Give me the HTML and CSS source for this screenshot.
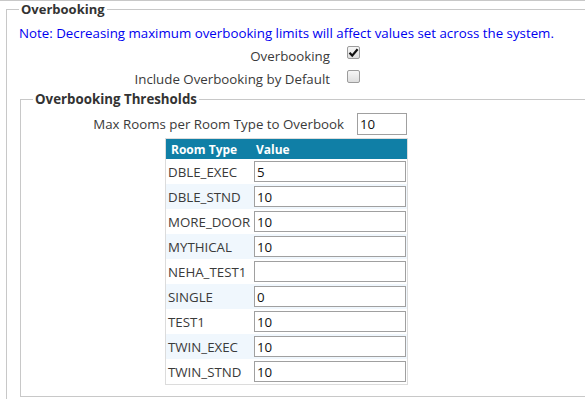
FILE: index.html
```html
<!DOCTYPE html>
<html>
<head>
<meta charset="utf-8">
<link rel="stylesheet" href="styles.css">
</head>
<body>
<div class="page">
  <fieldset class="fs outer">
    <legend class="lg">Overbooking</legend>
    <p class="note">Note: Decreasing maximum overbooking limits will affect values set across the system.</p>
    <div class="row">
      <span class="lbl">Overbooking</span>
      <span class="cb"><svg width="11" height="11" viewBox="0 0 11 11"><path d="M1.5 5.8 L4.2 8.6 L9.6 2.2" fill="none" stroke="#111" stroke-width="2.2" stroke-linejoin="miter"/></svg></span>
    </div>
    <div class="row">
      <span class="lbl">Include Overbooking by Default</span>
      <span class="cb cb-low"></span>
    </div>
    <fieldset class="fs inner">
      <legend class="lg lg-inner">Overbooking Thresholds</legend>
      <div class="max-row">
        <span class="max-lbl">Max Rooms per Room Type to Overbook</span>
        <input class="inp inp-max" type="text" value="10">
      </div>
      <table class="grid">
        <thead>
          <tr><th class="th-type">Room Type</th><th class="th-val">Value</th></tr>
        </thead>
        <tbody>
          <tr><td class="c-type">DBLE_EXEC</td><td class="c-val"><input class="inp" type="text" value="5"></td></tr>
          <tr><td class="c-type">DBLE_STND</td><td class="c-val"><input class="inp" type="text" value="10"></td></tr>
          <tr><td class="c-type">MORE_DOOR</td><td class="c-val"><input class="inp" type="text" value="10"></td></tr>
          <tr><td class="c-type">MYTHICAL</td><td class="c-val"><input class="inp" type="text" value="10"></td></tr>
          <tr><td class="c-type">NEHA_TEST1</td><td class="c-val"><input class="inp" type="text" value=""></td></tr>
          <tr><td class="c-type">SINGLE</td><td class="c-val"><input class="inp" type="text" value="0"></td></tr>
          <tr><td class="c-type">TEST1</td><td class="c-val"><input class="inp" type="text" value="10"></td></tr>
          <tr><td class="c-type">TWIN_EXEC</td><td class="c-val"><input class="inp" type="text" value="10"></td></tr>
          <tr><td class="c-type">TWIN_STND</td><td class="c-val"><input class="inp" type="text" value="10"></td></tr>
        </tbody>
      </table>
    </fieldset>
  </fieldset>
</div>
</body>
</html>
```

FILE: styles.css
```css
html, body {
  margin: 0;
  padding: 0;
  background: #fff;
  overflow: hidden;
}
body {
  font-family: "Open Sans", "Noto Sans", sans-serif;
  font-size: 13.3px;
  color: #3a3a3a;
}
.page {
  width: 640px;
  border-top: 1px solid #c8c8c8;
  padding-left: 6px;
}
.fs {
  border: 1px solid #c8c8c8;
  margin: 0;
  min-width: 0;
}
.outer {
  padding: 6px 0 0 12px;
  height: 420px;
}
.lg {
  font-weight: bold;
  font-size: 13px;
  line-height: 17px;
  padding: 0 2px;
  color: #333;
}
.lg-inner {
  font-size: 13.3px;
}
.note {
  margin: 0 0 3px 0;
  line-height: 18px;
  color: #0000f0;
  white-space: nowrap;
}
.row {
  display: flex;
  align-items: flex-start;
  height: 23px;
  line-height: 23px;
}
.lbl {
  width: 311px;
  text-align: right;
  white-space: nowrap;
}
.cb {
  margin-left: 17px;
  margin-top: 1px;
  width: 13px;
  height: 13px;
  box-sizing: border-box;
  border: 1px solid #9c9c9c;
  border-radius: 2px;
  background: linear-gradient(#f6f6f6, #dedede);
  display: flex;
  align-items: center;
  justify-content: center;
}
.cb-low {
  margin-top: 2px;
}
.inner {
  margin: 0 0 0 1px;
  padding: 5px 0 11px 12px;
}
.max-row {
  display: flex;
  align-items: center;
  height: 22px;
}
.max-lbl {
  width: 311px;
  text-align: right;
  white-space: nowrap;
}
.inp {
  box-sizing: border-box;
  height: 21px;
  width: 152px;
  margin: 2px 0;
  padding: 0 2px;
  border: 1px solid #a0a0a0;
  font-family: inherit;
  font-size: 13.3px;
  color: #111;
  background: #fff;
  display: block;
  outline: none;
}
.inp-max {
  margin: 0 0 0 13px;
  width: 50px;
  height: 22px;
}
.grid {
  margin: 3px 0 0 132px;
  border-collapse: collapse;
  border: 1px solid #dcdcdc;
  width: 243px;
}
.grid th {
  background: #107fa6;
  color: #fff;
  font-weight: bold;
  text-align: left;
  height: 20px;
  padding: 0;
  font-size: 12px;
}
.th-type {
  padding-left: 5px !important;
  width: 83px;
}
.th-val {
  padding-left: 2px !important;
}
.grid td {
  padding: 0;
}
.c-type {
  padding-left: 2px !important;
  width: 86px;
  white-space: nowrap;
}
.c-val {
  padding-right: 1px !important;
}
.grid tbody tr:nth-child(even) {
  background: #f0f7fd;
}
```
